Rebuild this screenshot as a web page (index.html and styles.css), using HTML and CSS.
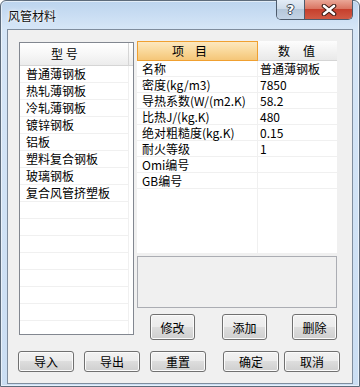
FILE: index.html
```html
<!DOCTYPE html>
<html lang="zh-CN">
<head>
  <meta charset="UTF-8" />
  <title>风管材料</title>
  <link rel="stylesheet" href="styles.css">
</head>
<body>
  <div class="window">
    <div class="titlebar">
      <span class="title">风管材料</span>
      <div class="caption-buttons">
        <span class="cap-btn help">?</span>
        <span class="cap-btn close">
          <svg width="16" height="12" viewBox="0 0 16 12">
            <path d="M3 2 L13 10 M13 2 L3 10" stroke="#3a1a14" stroke-width="4.6" stroke-linecap="round" fill="none"/>
            <path d="M3 2 L13 10 M13 2 L3 10" stroke="#ffffff" stroke-width="2.6" stroke-linecap="round" fill="none"/>
          </svg>
        </span>
      </div>
    </div>

    <div class="client">
      <div class="main">
        <div class="type-list">
          <div class="list-head">
            <span class="head-cell">型 号</span>
            <span class="head-rest"></span>
          </div>
          <ul class="list-rows">
            <li>普通薄钢板</li>
            <li>热轧薄钢板</li>
            <li>冷轧薄钢板</li>
            <li>镀锌钢板</li>
            <li>铝板</li>
            <li>塑料复合钢板</li>
            <li>玻璃钢板</li>
            <li>复合风管挤塑板</li>
            <li></li>
            <li></li>
            <li></li>
            <li></li>
            <li></li>
            <li></li>
            <li></li>
            <li></li>
          </ul>
        </div>

        <div class="side">
          <div class="prop-table">
            <div class="prop-head">
              <div class="col-name"><span>项</span><span>目</span></div>
              <div class="col-value"><span>数</span><span>值</span></div>
            </div>
            <div class="prop-row"><span class="cell-name">名称</span><span class="cell-value">普通薄钢板</span></div>
            <div class="prop-row"><span class="cell-name">密度(kg/m3)</span><span class="cell-value">7850</span></div>
            <div class="prop-row"><span class="cell-name">导热系数(W/(m2.K)</span><span class="cell-value">58.2</span></div>
            <div class="prop-row"><span class="cell-name">比热J/(kg.K)</span><span class="cell-value">480</span></div>
            <div class="prop-row"><span class="cell-name">绝对粗糙度(kg.K)</span><span class="cell-value">0.15</span></div>
            <div class="prop-row"><span class="cell-name">耐火等级</span><span class="cell-value">1</span></div>
            <div class="prop-row"><span class="cell-name">Omi编号</span><span class="cell-value"></span></div>
            <div class="prop-row"><span class="cell-name">GB编号</span><span class="cell-value"></span></div>
            <div class="prop-fill"><span class="cell-name"></span></div>
          </div>

          <div class="desc-box"></div>

          <div class="edit-buttons">
            <button class="btn btn-edit">修改</button>
            <button class="btn btn-add">添加</button>
            <button class="btn btn-del">删除</button>
          </div>
        </div>
      </div>

      <div class="footer-buttons">
        <button class="btn btn-foot">导入</button>
        <button class="btn btn-foot">导出</button>
        <button class="btn btn-foot">重置</button>
        <button class="btn btn-foot btn-ok">确定</button>
        <button class="btn btn-foot btn-cancel">取消</button>
      </div>
    </div>
  </div>
</body>
</html>
```

FILE: styles.css
```css
* {
  box-sizing: border-box;
}
body {
  margin: 0;
  font-family: "Noto Sans CJK SC", "Liberation Sans", sans-serif;
  font-size: 12px;
  color: #000;
  background: #fff;
}
.window {
  width: 360px;
  height: 387px;
  border: 1px solid #5d6b7b;
  border-radius: 6px 6px 0 0;
  padding: 0 6px 2px;
  background: linear-gradient(180deg, #bcd4ee 0, #d6e6f7 28px, #cbdef3 100%);
  box-shadow: inset 0 0 0 1px rgba(255, 255, 255, 0.55);
  display: flex;
  flex-direction: column;
}

/* title bar */
.titlebar {
  height: 28px;
  flex: none;
  display: flex;
  align-items: center;
  padding-left: 1px;
}
.title {
  font-size: 12px;
  color: #111;
  text-shadow: 0 0 5px #fff, 0 0 2px #fff;
}
.caption-buttons {
  margin-left: auto;
  align-self: flex-start;
  margin-top: -1px;
  height: 20px;
  display: flex;
  border: 1px solid #4d5b6c;
  border-top: none;
  border-radius: 0 0 5px 5px;
  overflow: hidden;
}
.cap-btn {
  display: flex;
  align-items: center;
  justify-content: center;
  height: 100%;
}
.help {
  width: 28px;
  border-right: 1px solid #4d5b6c;
  background: linear-gradient(180deg, #e3ecf6 0, #cfdcea 45%, #b5c7da 50%, #c3d4e6 100%);
  color: #fff;
  font-family: "DejaVu Sans", sans-serif;
  font-weight: bold;
  font-size: 13px;
  text-shadow: 1px 0 0 #33404f, -1px 0 0 #33404f, 0 1px 0 #33404f, 0 -1px 0 #33404f;
}
.close {
  width: 47px;
  background: linear-gradient(180deg, #eaa797 0, #da7663 45%, #c6402d 50%, #d05a45 100%);
}

/* client area */
.client {
  flex: 1;
  border: 1px solid #7f8d9e;
  background: #f0f0f0;
  padding-top: 11px;
  display: flex;
  flex-direction: column;
}
.main {
  display: flex;
  align-items: flex-start;
  padding-left: 11px;
}

/* left list */
.type-list {
  width: 115px;
  height: 293px;
  margin-top: 1px;
  border: 1px solid #828790;
  background: #fff;
  overflow: hidden;
}
.list-head {
  height: 23px;
  display: flex;
  border-bottom: 1px solid #d5d5d5;
  background: linear-gradient(180deg, #ffffff 0, #f7f7f7 50%, #ececec 100%);
}
.head-cell {
  width: 109px;
  border-right: 1px solid #d5d5d5;
  padding-left: 31px;
  line-height: 22px;
}
.list-rows {
  list-style: none;
  margin: 0;
  padding: 0;
}
.list-rows li {
  width: 109px;
  height: 17px;
  line-height: 16px;
  padding-left: 6px;
  border-bottom: 1px solid #f0f0f0;
  border-right: 1px solid #f0f0f0;
  white-space: nowrap;
}

/* right side */
.side {
  width: 200px;
  margin-left: 3px;
  display: flex;
  flex-direction: column;
}
.prop-table {
  height: 212px;
  background: #fff;
  display: flex;
  flex-direction: column;
}
.prop-head {
  height: 20px;
  flex: none;
  display: flex;
}
.col-name {
  width: 121px;
  display: flex;
  gap: 11px;
  padding-left: 34px;
  line-height: 18px;
  border: 1px solid #f0a030;
  background: linear-gradient(180deg, #fde8bf 0, #f9d89a 50%, #f5c678 100%);
}
.col-value {
  flex: 1;
  display: flex;
  gap: 13px;
  padding-left: 20px;
  line-height: 19px;
  border-bottom: 1px solid #d5d5d5;
  background: linear-gradient(180deg, #fdfdfd 0, #f3f3f3 50%, #e9e9e9 100%);
}
.prop-row {
  height: 16px;
  flex: none;
  display: flex;
  line-height: 15px;
  border-bottom: 1px solid #f0f0f0;
}
.cell-name {
  width: 121px;
  flex: none;
  padding-left: 5px;
  border-right: 1px solid #f0f0f0;
  white-space: nowrap;
}
.cell-value {
  padding-left: 2px;
  white-space: nowrap;
}
.prop-fill {
  flex: 1;
  display: flex;
}
.desc-box {
  margin-top: 3px;
  height: 52px;
  border: 1px solid #abadb3;
  background: #f0f0f0;
}

/* buttons */
.btn {
  font-family: "Noto Sans CJK SC", "Liberation Sans", sans-serif;
  font-size: 12px;
  color: #000;
  padding: 0;
  border: 1px solid #707070;
  border-radius: 3px;
  background: linear-gradient(180deg, #f2f2f2 0, #ebebeb 50%, #dddddd 50%, #cfcfcf 100%);
  box-shadow: inset 0 0 0 1px #fbfbfb;
}
.edit-buttons {
  margin-top: 6px;
  height: 26px;
  display: flex;
  padding-left: 13px;
}
.edit-buttons .btn {
  width: 46px;
  height: 26px;
}
.btn-add {
  margin-left: 27px;
}
.btn-del {
  margin-left: 25px;
}
.footer-buttons {
  margin-top: 11px;
  display: flex;
  gap: 10px;
  padding-left: 10px;
}
.btn-foot {
  width: 56px;
  height: 21px;
}
.btn-ok {
  margin-left: 7px;
}
.btn-cancel {
  margin-left: -5px;
}
```
